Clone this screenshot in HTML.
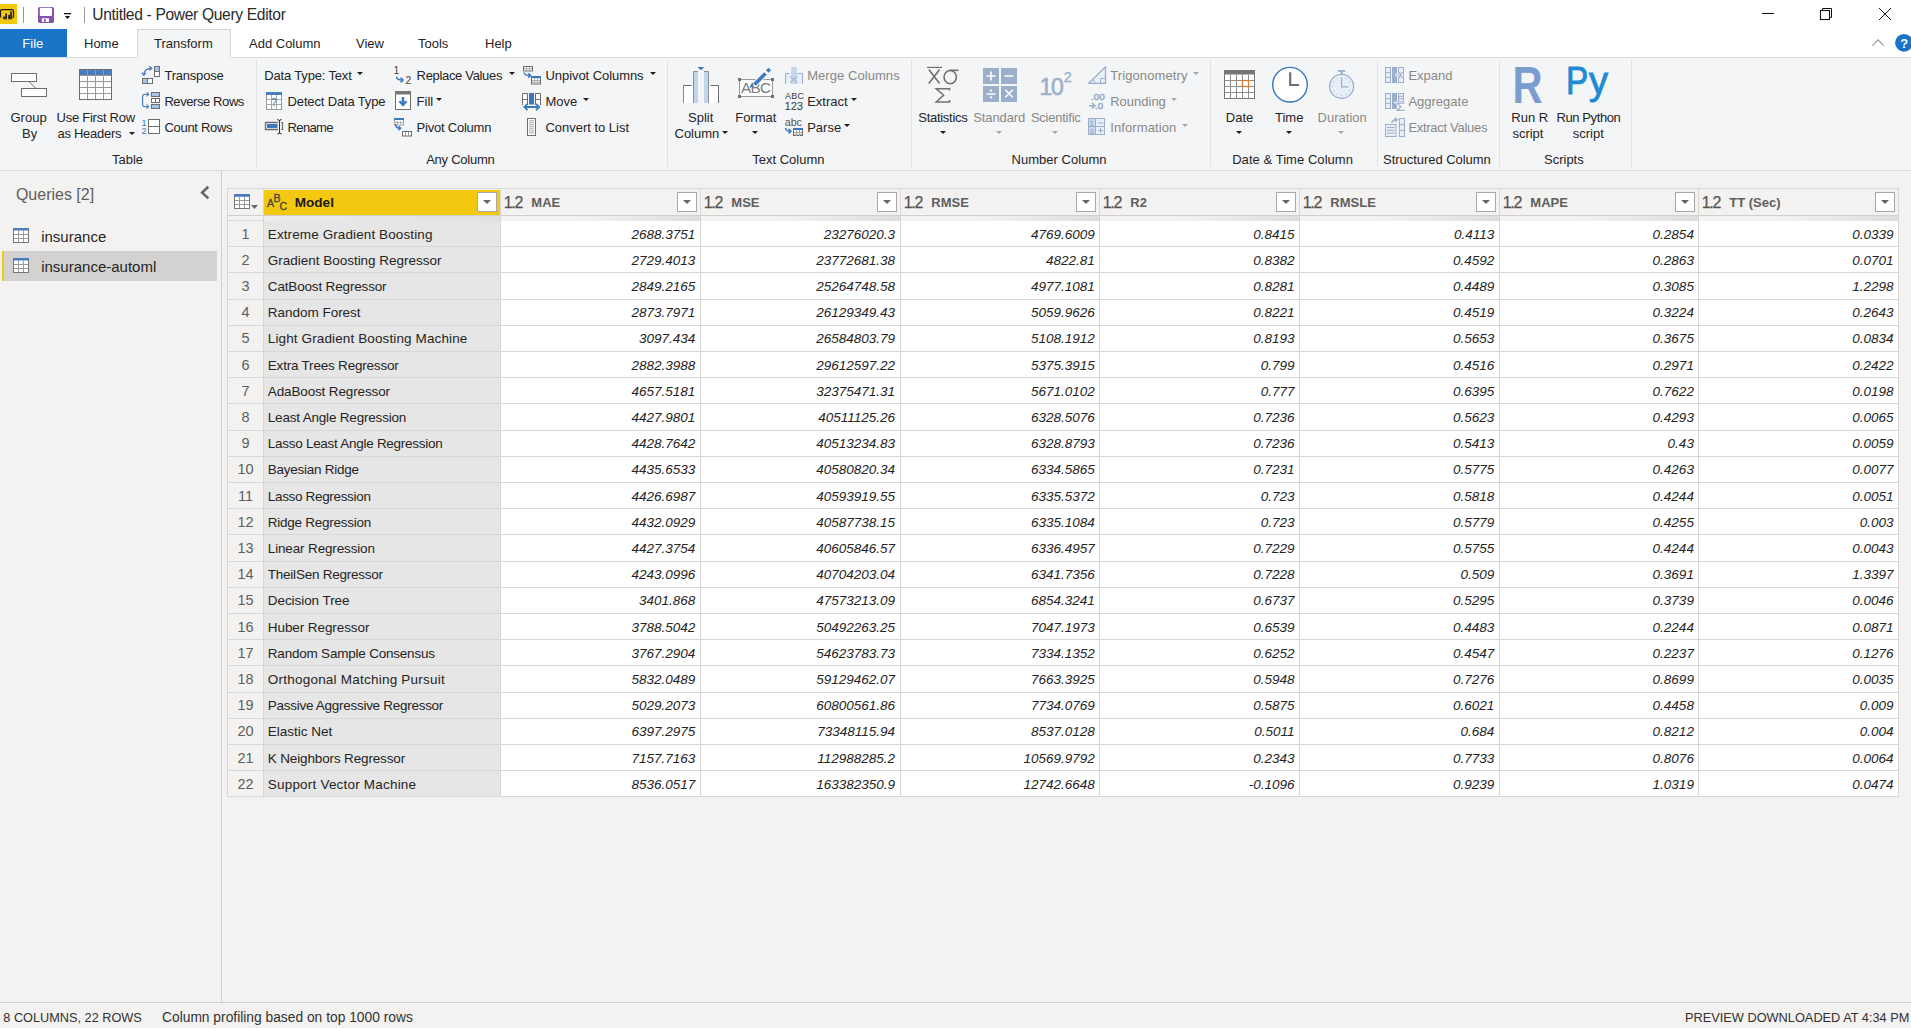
<!DOCTYPE html><html><head><meta charset="utf-8"><title>Power Query Editor</title><style>
*{margin:0;padding:0;box-sizing:border-box}
html,body{width:1911px;height:1028px;overflow:hidden;background:#f3f2f1;font-family:"Liberation Sans",sans-serif}
.t{position:absolute;white-space:pre;line-height:1}
.r{position:absolute}
.s{position:absolute;overflow:visible}
</style></head><body>
<div class="r" style="left:0px;top:0px;width:1911px;height:57px;background:#ffffff;"></div>
<div class="t" style="left:92.3px;top:7.29px;font-size:15.6px;color:#2a2a2a;letter-spacing:-0.33px;">Untitled - Power Query Editor</div>
<div class="r" style="left:0px;top:57px;width:1911px;height:1px;background:#dadbdc;"></div>
<div class="r" style="left:0px;top:29px;width:67px;height:28px;background:#1a75c9;"></div>
<div class="t" style="left:22.3px;top:37.00px;font-size:13px;color:#ffffff;">File</div>
<div class="r" style="left:137px;top:29px;width:94px;height:29px;background:#f4f5f7;border:1px solid #d6d6d6;border-bottom:none;"></div>
<div class="t" style="left:84px;top:37.00px;font-size:13px;color:#252423;">Home</div>
<div class="t" style="left:154px;top:37.00px;font-size:13px;color:#252423;">Transform</div>
<div class="t" style="left:249px;top:37.00px;font-size:13px;color:#252423;">Add Column</div>
<div class="t" style="left:356px;top:37.00px;font-size:13px;color:#252423;">View</div>
<div class="t" style="left:418px;top:37.00px;font-size:13px;color:#252423;">Tools</div>
<div class="t" style="left:485px;top:37.00px;font-size:13px;color:#252423;">Help</div>
<div class="r" style="left:0px;top:58px;width:1911px;height:112px;background:#f4f5f7;"></div>
<div class="r" style="left:137px;top:57px;width:94px;height:1px;background:#f4f5f7;"></div>
<div class="r" style="left:0px;top:170px;width:1911px;height:1px;background:#dadada;"></div>
<div class="r" style="left:256px;top:60px;width:1px;height:107px;background:#e1e2e4;"></div>
<div class="r" style="left:667px;top:60px;width:1px;height:107px;background:#e1e2e4;"></div>
<div class="r" style="left:911px;top:60px;width:1px;height:107px;background:#e1e2e4;"></div>
<div class="r" style="left:1210px;top:60px;width:1px;height:107px;background:#e1e2e4;"></div>
<div class="r" style="left:1377px;top:60px;width:1px;height:107px;background:#e1e2e4;"></div>
<div class="r" style="left:1499px;top:60px;width:1px;height:107px;background:#e1e2e4;"></div>
<div class="r" style="left:1631px;top:60px;width:1px;height:107px;background:#e1e2e4;"></div>
<div class="t" style="left:10.5px;top:111.00px;font-size:13px;color:#252423;">Group</div>
<div class="t" style="left:22px;top:127.00px;font-size:13px;color:#252423;">By</div>
<div class="t" style="left:56.6px;top:111.00px;font-size:13px;color:#252423;letter-spacing:-0.262px;">Use First Row</div>
<div class="t" style="left:57.5px;top:127.00px;font-size:13px;color:#252423;letter-spacing:-0.284px;">as Headers</div>
<svg class="s" style="left:129px;top:132px" width="6" height="4" viewBox="0 0 6 4"><path d="M0 0H6L3.0 3Z" fill="#1f1f1f"/></svg>
<div class="t" style="left:164.4px;top:69.00px;font-size:13px;color:#252423;letter-spacing:-0.207px;">Transpose</div>
<div class="t" style="left:164.4px;top:95.00px;font-size:13px;color:#252423;letter-spacing:-0.414px;">Reverse Rows</div>
<div class="t" style="left:164.5px;top:121.00px;font-size:13px;color:#252423;letter-spacing:-0.303px;">Count Rows</div>
<div class="t" style="left:112px;top:153.00px;font-size:13px;color:#252423;">Table</div>
<div class="t" style="left:264.3px;top:69.00px;font-size:13px;color:#252423;letter-spacing:-0.168px;">Data Type: Text</div>
<svg class="s" style="left:357px;top:72px" width="6" height="4" viewBox="0 0 6 4"><path d="M0 0H6L3.0 3Z" fill="#1f1f1f"/></svg>
<div class="t" style="left:287.6px;top:95.00px;font-size:13px;color:#252423;letter-spacing:-0.156px;">Detect Data Type</div>
<div class="t" style="left:287.6px;top:121.00px;font-size:13px;color:#252423;letter-spacing:-0.665px;">Rename</div>
<div class="t" style="left:416.6px;top:69.00px;font-size:13px;color:#252423;letter-spacing:-0.329px;">Replace Values</div>
<svg class="s" style="left:509px;top:72px" width="6" height="4" viewBox="0 0 6 4"><path d="M0 0H6L3.0 3Z" fill="#1f1f1f"/></svg>
<div class="t" style="left:416.6px;top:95.00px;font-size:13px;color:#252423;">Fill</div>
<svg class="s" style="left:436px;top:98px" width="6" height="4" viewBox="0 0 6 4"><path d="M0 0H6L3.0 3Z" fill="#1f1f1f"/></svg>
<div class="t" style="left:416.6px;top:121.00px;font-size:13px;color:#252423;letter-spacing:-0.227px;">Pivot Column</div>
<div class="t" style="left:545.5px;top:69.00px;font-size:13px;color:#252423;letter-spacing:-0.065px;">Unpivot Columns</div>
<svg class="s" style="left:650px;top:72px" width="6" height="4" viewBox="0 0 6 4"><path d="M0 0H6L3.0 3Z" fill="#1f1f1f"/></svg>
<div class="t" style="left:545.5px;top:95.00px;font-size:13px;color:#252423;">Move</div>
<svg class="s" style="left:583px;top:98px" width="6" height="4" viewBox="0 0 6 4"><path d="M0 0H6L3.0 3Z" fill="#1f1f1f"/></svg>
<div class="t" style="left:545.5px;top:121.00px;font-size:13px;color:#252423;letter-spacing:-0.023px;">Convert to List</div>
<div class="t" style="left:426.2px;top:153.00px;font-size:13px;color:#252423;letter-spacing:-0.248px;">Any Column</div>
<div class="t" style="left:688px;top:111.00px;font-size:13px;color:#252423;">Split</div>
<div class="t" style="left:674.5px;top:127.00px;font-size:13px;color:#252423;">Column</div>
<svg class="s" style="left:722px;top:131px" width="6" height="4" viewBox="0 0 6 4"><path d="M0 0H6L3.0 3Z" fill="#1f1f1f"/></svg>
<div class="t" style="left:735.2px;top:111.00px;font-size:13px;color:#252423;">Format</div>
<svg class="s" style="left:752px;top:131px" width="6" height="4" viewBox="0 0 6 4"><path d="M0 0H6L3.0 3Z" fill="#1f1f1f"/></svg>
<div class="t" style="left:807.2px;top:69.00px;font-size:13px;color:#8a8886;letter-spacing:0.059px;">Merge Columns</div>
<div class="t" style="left:807.2px;top:95.00px;font-size:13px;color:#252423;">Extract</div>
<svg class="s" style="left:851px;top:98px" width="6" height="4" viewBox="0 0 6 4"><path d="M0 0H6L3.0 3Z" fill="#1f1f1f"/></svg>
<div class="t" style="left:807.2px;top:121.00px;font-size:13px;color:#252423;">Parse</div>
<svg class="s" style="left:844px;top:124px" width="6" height="4" viewBox="0 0 6 4"><path d="M0 0H6L3.0 3Z" fill="#1f1f1f"/></svg>
<div class="t" style="left:752.2px;top:153.00px;font-size:13px;color:#252423;">Text Column</div>
<div class="t" style="left:918.3px;top:111.00px;font-size:13px;color:#252423;letter-spacing:-0.289px;">Statistics</div>
<svg class="s" style="left:940.3px;top:131px" width="6" height="4" viewBox="0 0 6 4"><path d="M0 0H6L3.0 3Z" fill="#1f1f1f"/></svg>
<div class="t" style="left:973.2px;top:111.00px;font-size:13px;color:#8a8886;letter-spacing:-0.093px;">Standard</div>
<svg class="s" style="left:996px;top:131px" width="6" height="4" viewBox="0 0 6 4"><path d="M0 0H6L3.0 3Z" fill="#a6a6a6"/></svg>
<div class="t" style="left:1030.9px;top:111.00px;font-size:13px;color:#8a8886;letter-spacing:-0.236px;">Scientific</div>
<svg class="s" style="left:1052px;top:131px" width="6" height="4" viewBox="0 0 6 4"><path d="M0 0H6L3.0 3Z" fill="#a6a6a6"/></svg>
<div class="t" style="left:1110.2px;top:69.00px;font-size:13px;color:#8a8886;letter-spacing:0.107px;">Trigonometry</div>
<svg class="s" style="left:1193px;top:72px" width="6" height="4" viewBox="0 0 6 4"><path d="M0 0H6L3.0 3Z" fill="#a6a6a6"/></svg>
<div class="t" style="left:1110.2px;top:95.00px;font-size:13px;color:#8a8886;">Rounding</div>
<svg class="s" style="left:1171px;top:98px" width="6" height="4" viewBox="0 0 6 4"><path d="M0 0H6L3.0 3Z" fill="#a6a6a6"/></svg>
<div class="t" style="left:1110.2px;top:121.00px;font-size:13px;color:#8a8886;letter-spacing:0.1px;">Information</div>
<svg class="s" style="left:1182px;top:124px" width="6" height="4" viewBox="0 0 6 4"><path d="M0 0H6L3.0 3Z" fill="#a6a6a6"/></svg>
<div class="t" style="left:1011.5px;top:153.00px;font-size:13px;color:#252423;letter-spacing:0.036px;">Number Column</div>
<div class="t" style="left:1225.8px;top:111.00px;font-size:13px;color:#252423;">Date</div>
<svg class="s" style="left:1236px;top:131px" width="6" height="4" viewBox="0 0 6 4"><path d="M0 0H6L3.0 3Z" fill="#1f1f1f"/></svg>
<div class="t" style="left:1275px;top:111.00px;font-size:13px;color:#252423;">Time</div>
<svg class="s" style="left:1286px;top:131px" width="6" height="4" viewBox="0 0 6 4"><path d="M0 0H6L3.0 3Z" fill="#1f1f1f"/></svg>
<div class="t" style="left:1317.6px;top:111.00px;font-size:13px;color:#8a8886;">Duration</div>
<svg class="s" style="left:1338px;top:131px" width="6" height="4" viewBox="0 0 6 4"><path d="M0 0H6L3.0 3Z" fill="#a6a6a6"/></svg>
<div class="t" style="left:1232.2px;top:153.00px;font-size:13px;color:#252423;letter-spacing:0.049px;">Date &amp; Time Column</div>
<div class="t" style="left:1408.4px;top:69.00px;font-size:13px;color:#8a8886;">Expand</div>
<div class="t" style="left:1408.4px;top:95.00px;font-size:13px;color:#8a8886;">Aggregate</div>
<div class="t" style="left:1408.4px;top:121.00px;font-size:13px;color:#8a8886;letter-spacing:-0.293px;">Extract Values</div>
<div class="t" style="left:1383px;top:153.00px;font-size:13px;color:#252423;letter-spacing:-0.036px;">Structured Column</div>
<div class="t" style="left:1511.3px;top:111.00px;font-size:13px;color:#252423;">Run R</div>
<div class="t" style="left:1512.4px;top:127.00px;font-size:13px;color:#252423;">script</div>
<div class="t" style="left:1556.5px;top:111.00px;font-size:13px;color:#252423;letter-spacing:-0.406px;">Run Python</div>
<div class="t" style="left:1572.7px;top:127.00px;font-size:13px;color:#252423;">script</div>
<div class="t" style="left:1544px;top:153.00px;font-size:13px;color:#252423;">Scripts</div>
<div class="r" style="left:221px;top:171px;width:1px;height:831px;background:#d2d0ce;"></div>
<div class="t" style="left:15.9px;top:187.46px;font-size:16px;color:#5f5d5b;">Queries [2]</div>
<div class="r" style="left:2px;top:251px;width:215px;height:30px;background:#d3d2d0;"></div>
<div class="r" style="left:2px;top:251px;width:2px;height:30px;background:#f2c811;"></div>
<div class="t" style="left:41.2px;top:229.30px;font-size:15px;color:#252423;">insurance</div>
<div class="t" style="left:41.2px;top:259.30px;font-size:15px;color:#252423;">insurance-automl</div>
<div class="r" style="left:227px;top:188px;width:1672px;height:1px;background:#d8d7d6;"></div>
<div class="r" style="left:227px;top:189px;width:1672px;height:26px;background:#f3f2f1;"></div>
<div class="r" style="left:264px;top:190px;width:236px;height:25px;background:#f2c811;"></div>
<div class="r" style="left:227px;top:215px;width:1672px;height:1px;background:#d0cfce;"></div>
<div class="r" style="left:227px;top:216px;width:1672px;height:5px;background:#f3f2f1;"></div>
<div class="r" style="left:264px;top:216px;width:236px;height:5px;background:linear-gradient(90deg,#ececec,#e0e0e0);"></div>
<div class="r" style="left:501px;top:216px;width:199px;height:5px;background:linear-gradient(90deg,#f4f4f4 0%,#f1f1f1 45%,#dedede 100%);"></div>
<div class="r" style="left:701px;top:216px;width:199px;height:5px;background:linear-gradient(90deg,#f4f4f4 0%,#f1f1f1 45%,#dedede 100%);"></div>
<div class="r" style="left:901px;top:216px;width:198px;height:5px;background:linear-gradient(90deg,#f4f4f4 0%,#f1f1f1 45%,#dedede 100%);"></div>
<div class="r" style="left:1100px;top:216px;width:199px;height:5px;background:linear-gradient(90deg,#f4f4f4 0%,#f1f1f1 45%,#dedede 100%);"></div>
<div class="r" style="left:1300px;top:216px;width:199px;height:5px;background:linear-gradient(90deg,#f4f4f4 0%,#f1f1f1 45%,#dedede 100%);"></div>
<div class="r" style="left:1500px;top:216px;width:198px;height:5px;background:linear-gradient(90deg,#f4f4f4 0%,#f1f1f1 45%,#dedede 100%);"></div>
<div class="r" style="left:1699px;top:216px;width:199px;height:5px;background:linear-gradient(90deg,#f4f4f4 0%,#f1f1f1 45%,#dedede 100%);"></div>
<div class="r" style="left:227px;top:220px;width:36px;height:1px;background:#d8d7d6;"></div>
<div class="r" style="left:264px;top:221px;width:236px;height:575px;background:#e6e6e6;"></div>
<div class="r" style="left:501px;top:221px;width:1398px;height:575px;background:#ffffff;"></div>
<div class="r" style="left:227px;top:246px;width:1672px;height:1px;background:#d8d7d6;"></div>
<div class="r" style="left:227px;top:272px;width:1672px;height:1px;background:#d8d7d6;"></div>
<div class="r" style="left:227px;top:299px;width:1672px;height:1px;background:#d8d7d6;"></div>
<div class="r" style="left:227px;top:325px;width:1672px;height:1px;background:#d8d7d6;"></div>
<div class="r" style="left:227px;top:351px;width:1672px;height:1px;background:#d8d7d6;"></div>
<div class="r" style="left:227px;top:377px;width:1672px;height:1px;background:#d8d7d6;"></div>
<div class="r" style="left:227px;top:403px;width:1672px;height:1px;background:#d8d7d6;"></div>
<div class="r" style="left:227px;top:430px;width:1672px;height:1px;background:#d8d7d6;"></div>
<div class="r" style="left:227px;top:456px;width:1672px;height:1px;background:#d8d7d6;"></div>
<div class="r" style="left:227px;top:482px;width:1672px;height:1px;background:#d8d7d6;"></div>
<div class="r" style="left:227px;top:508px;width:1672px;height:1px;background:#d8d7d6;"></div>
<div class="r" style="left:227px;top:534px;width:1672px;height:1px;background:#d8d7d6;"></div>
<div class="r" style="left:227px;top:561px;width:1672px;height:1px;background:#d8d7d6;"></div>
<div class="r" style="left:227px;top:587px;width:1672px;height:1px;background:#d8d7d6;"></div>
<div class="r" style="left:227px;top:613px;width:1672px;height:1px;background:#d8d7d6;"></div>
<div class="r" style="left:227px;top:639px;width:1672px;height:1px;background:#d8d7d6;"></div>
<div class="r" style="left:227px;top:665px;width:1672px;height:1px;background:#d8d7d6;"></div>
<div class="r" style="left:227px;top:692px;width:1672px;height:1px;background:#d8d7d6;"></div>
<div class="r" style="left:227px;top:718px;width:1672px;height:1px;background:#d8d7d6;"></div>
<div class="r" style="left:227px;top:744px;width:1672px;height:1px;background:#d8d7d6;"></div>
<div class="r" style="left:227px;top:770px;width:1672px;height:1px;background:#d8d7d6;"></div>
<div class="r" style="left:227px;top:796px;width:1672px;height:1px;background:#d8d7d6;"></div>
<div class="r" style="left:227px;top:188px;width:1px;height:609px;background:#d8d7d6;"></div>
<div class="r" style="left:263px;top:189px;width:1px;height:608px;background:#d8d7d6;"></div>
<div class="r" style="left:500px;top:189px;width:1px;height:608px;background:#d8d7d6;"></div>
<div class="r" style="left:700px;top:189px;width:1px;height:608px;background:#d8d7d6;"></div>
<div class="r" style="left:900px;top:189px;width:1px;height:608px;background:#d8d7d6;"></div>
<div class="r" style="left:1099px;top:189px;width:1px;height:608px;background:#d8d7d6;"></div>
<div class="r" style="left:1299px;top:189px;width:1px;height:608px;background:#d8d7d6;"></div>
<div class="r" style="left:1499px;top:189px;width:1px;height:608px;background:#d8d7d6;"></div>
<div class="r" style="left:1698px;top:189px;width:1px;height:608px;background:#d8d7d6;"></div>
<div class="r" style="left:1898px;top:189px;width:1px;height:608px;background:#d8d7d6;"></div>
<div class="t" style="left:294.7px;top:195.99px;font-size:13.6px;color:#1b1a19;font-weight:bold;">Model</div>
<div class="t" style="left:503.7px;top:195.46px;font-size:16px;color:#575553;letter-spacing:-1.3px;-webkit-text-stroke:0.25px #575553;">1.2</div>
<div class="t" style="left:531.3px;top:196.00px;font-size:13px;color:#605e5c;font-weight:bold;">MAE</div>
<div class="t" style="left:703.7px;top:195.46px;font-size:16px;color:#575553;letter-spacing:-1.3px;-webkit-text-stroke:0.25px #575553;">1.2</div>
<div class="t" style="left:731.3px;top:196.00px;font-size:13px;color:#605e5c;font-weight:bold;">MSE</div>
<div class="t" style="left:903.7px;top:195.46px;font-size:16px;color:#575553;letter-spacing:-1.3px;-webkit-text-stroke:0.25px #575553;">1.2</div>
<div class="t" style="left:931.3px;top:196.00px;font-size:13px;color:#605e5c;font-weight:bold;">RMSE</div>
<div class="t" style="left:1102.7px;top:195.46px;font-size:16px;color:#575553;letter-spacing:-1.3px;-webkit-text-stroke:0.25px #575553;">1.2</div>
<div class="t" style="left:1130.3px;top:196.00px;font-size:13px;color:#605e5c;font-weight:bold;">R2</div>
<div class="t" style="left:1302.7px;top:195.46px;font-size:16px;color:#575553;letter-spacing:-1.3px;-webkit-text-stroke:0.25px #575553;">1.2</div>
<div class="t" style="left:1330.3px;top:196.00px;font-size:13px;color:#605e5c;font-weight:bold;">RMSLE</div>
<div class="t" style="left:1502.7px;top:195.46px;font-size:16px;color:#575553;letter-spacing:-1.3px;-webkit-text-stroke:0.25px #575553;">1.2</div>
<div class="t" style="left:1530.3px;top:196.00px;font-size:13px;color:#605e5c;font-weight:bold;">MAPE</div>
<div class="t" style="left:1701.7px;top:195.46px;font-size:16px;color:#575553;letter-spacing:-1.3px;-webkit-text-stroke:0.25px #575553;">1.2</div>
<div class="t" style="left:1729.3px;top:196.00px;font-size:13px;color:#605e5c;font-weight:bold;">TT (Sec)</div>
<div class="r" style="left:477px;top:192px;width:20px;height:20px;background:#ffffff;border:1px solid #a8a8a8;"></div>
<svg class="s" style="left:483px;top:200px" width="8" height="5" viewBox="0 0 8 5"><path d="M0 0H8L4.0 4Z" fill="#666666"/></svg>
<div class="r" style="left:677px;top:192px;width:20px;height:20px;background:#ffffff;border:1px solid #a8a8a8;"></div>
<svg class="s" style="left:683px;top:200px" width="8" height="5" viewBox="0 0 8 5"><path d="M0 0H8L4.0 4Z" fill="#666666"/></svg>
<div class="r" style="left:877px;top:192px;width:20px;height:20px;background:#ffffff;border:1px solid #a8a8a8;"></div>
<svg class="s" style="left:883px;top:200px" width="8" height="5" viewBox="0 0 8 5"><path d="M0 0H8L4.0 4Z" fill="#666666"/></svg>
<div class="r" style="left:1076px;top:192px;width:20px;height:20px;background:#ffffff;border:1px solid #a8a8a8;"></div>
<svg class="s" style="left:1082px;top:200px" width="8" height="5" viewBox="0 0 8 5"><path d="M0 0H8L4.0 4Z" fill="#666666"/></svg>
<div class="r" style="left:1276px;top:192px;width:20px;height:20px;background:#ffffff;border:1px solid #a8a8a8;"></div>
<svg class="s" style="left:1282px;top:200px" width="8" height="5" viewBox="0 0 8 5"><path d="M0 0H8L4.0 4Z" fill="#666666"/></svg>
<div class="r" style="left:1476px;top:192px;width:20px;height:20px;background:#ffffff;border:1px solid #a8a8a8;"></div>
<svg class="s" style="left:1482px;top:200px" width="8" height="5" viewBox="0 0 8 5"><path d="M0 0H8L4.0 4Z" fill="#666666"/></svg>
<div class="r" style="left:1675px;top:192px;width:20px;height:20px;background:#ffffff;border:1px solid #a8a8a8;"></div>
<svg class="s" style="left:1681px;top:200px" width="8" height="5" viewBox="0 0 8 5"><path d="M0 0H8L4.0 4Z" fill="#666666"/></svg>
<div class="r" style="left:1875px;top:192px;width:20px;height:20px;background:#ffffff;border:1px solid #a8a8a8;"></div>
<svg class="s" style="left:1881px;top:200px" width="8" height="5" viewBox="0 0 8 5"><path d="M0 0H8L4.0 4Z" fill="#666666"/></svg>
<div class="t" style="left:228px;top:227.23px;font-size:14.5px;color:#605e5c;width:35px;text-align:center;">1</div>
<div class="t" style="left:267.8px;top:227.57px;font-size:13.5px;color:#252423;letter-spacing:0.105px;">Extreme Gradient Boosting</div>
<div class="t" style="right:1215.69px;top:227.57px;font-size:13.5px;color:#252423;font-style:italic;">2688.3751</div>
<div class="t" style="right:1015.97px;top:227.57px;font-size:13.5px;color:#252423;font-style:italic;">23276020.3</div>
<div class="t" style="right:816.26px;top:227.57px;font-size:13.5px;color:#252423;font-style:italic;">4769.6009</div>
<div class="t" style="right:616.54px;top:227.57px;font-size:13.5px;color:#252423;font-style:italic;">0.8415</div>
<div class="t" style="right:416.8299999999999px;top:227.57px;font-size:13.5px;color:#252423;font-style:italic;">0.4113</div>
<div class="t" style="right:217.1199999999999px;top:227.57px;font-size:13.5px;color:#252423;font-style:italic;">0.2854</div>
<div class="t" style="right:17.40000000000009px;top:227.57px;font-size:13.5px;color:#252423;font-style:italic;">0.0339</div>
<div class="t" style="left:228px;top:253.23px;font-size:14.5px;color:#605e5c;width:35px;text-align:center;">2</div>
<div class="t" style="left:267.8px;top:253.57px;font-size:13.5px;color:#252423;letter-spacing:-0.015px;">Gradient Boosting Regressor</div>
<div class="t" style="right:1215.69px;top:253.57px;font-size:13.5px;color:#252423;font-style:italic;">2729.4013</div>
<div class="t" style="right:1015.97px;top:253.57px;font-size:13.5px;color:#252423;font-style:italic;">23772681.38</div>
<div class="t" style="right:816.26px;top:253.57px;font-size:13.5px;color:#252423;font-style:italic;">4822.81</div>
<div class="t" style="right:616.54px;top:253.57px;font-size:13.5px;color:#252423;font-style:italic;">0.8382</div>
<div class="t" style="right:416.8299999999999px;top:253.57px;font-size:13.5px;color:#252423;font-style:italic;">0.4592</div>
<div class="t" style="right:217.1199999999999px;top:253.57px;font-size:13.5px;color:#252423;font-style:italic;">0.2863</div>
<div class="t" style="right:17.40000000000009px;top:253.57px;font-size:13.5px;color:#252423;font-style:italic;">0.0701</div>
<div class="t" style="left:228px;top:279.23px;font-size:14.5px;color:#605e5c;width:35px;text-align:center;">3</div>
<div class="t" style="left:267.8px;top:279.57px;font-size:13.5px;color:#252423;letter-spacing:-0.162px;">CatBoost Regressor</div>
<div class="t" style="right:1215.69px;top:279.57px;font-size:13.5px;color:#252423;font-style:italic;">2849.2165</div>
<div class="t" style="right:1015.97px;top:279.57px;font-size:13.5px;color:#252423;font-style:italic;">25264748.58</div>
<div class="t" style="right:816.26px;top:279.57px;font-size:13.5px;color:#252423;font-style:italic;">4977.1081</div>
<div class="t" style="right:616.54px;top:279.57px;font-size:13.5px;color:#252423;font-style:italic;">0.8281</div>
<div class="t" style="right:416.8299999999999px;top:279.57px;font-size:13.5px;color:#252423;font-style:italic;">0.4489</div>
<div class="t" style="right:217.1199999999999px;top:279.57px;font-size:13.5px;color:#252423;font-style:italic;">0.3085</div>
<div class="t" style="right:17.40000000000009px;top:279.57px;font-size:13.5px;color:#252423;font-style:italic;">1.2298</div>
<div class="t" style="left:228px;top:305.23px;font-size:14.5px;color:#605e5c;width:35px;text-align:center;">4</div>
<div class="t" style="left:267.8px;top:305.57px;font-size:13.5px;color:#252423;letter-spacing:-0.02px;">Random Forest</div>
<div class="t" style="right:1215.69px;top:305.57px;font-size:13.5px;color:#252423;font-style:italic;">2873.7971</div>
<div class="t" style="right:1015.97px;top:305.57px;font-size:13.5px;color:#252423;font-style:italic;">26129349.43</div>
<div class="t" style="right:816.26px;top:305.57px;font-size:13.5px;color:#252423;font-style:italic;">5059.9626</div>
<div class="t" style="right:616.54px;top:305.57px;font-size:13.5px;color:#252423;font-style:italic;">0.8221</div>
<div class="t" style="right:416.8299999999999px;top:305.57px;font-size:13.5px;color:#252423;font-style:italic;">0.4519</div>
<div class="t" style="right:217.1199999999999px;top:305.57px;font-size:13.5px;color:#252423;font-style:italic;">0.3224</div>
<div class="t" style="right:17.40000000000009px;top:305.57px;font-size:13.5px;color:#252423;font-style:italic;">0.2643</div>
<div class="t" style="left:228px;top:331.23px;font-size:14.5px;color:#605e5c;width:35px;text-align:center;">5</div>
<div class="t" style="left:267.8px;top:331.57px;font-size:13.5px;color:#252423;letter-spacing:0.121px;">Light Gradient Boosting Machine</div>
<div class="t" style="right:1215.69px;top:331.57px;font-size:13.5px;color:#252423;font-style:italic;">3097.434</div>
<div class="t" style="right:1015.97px;top:331.57px;font-size:13.5px;color:#252423;font-style:italic;">26584803.79</div>
<div class="t" style="right:816.26px;top:331.57px;font-size:13.5px;color:#252423;font-style:italic;">5108.1912</div>
<div class="t" style="right:616.54px;top:331.57px;font-size:13.5px;color:#252423;font-style:italic;">0.8193</div>
<div class="t" style="right:416.8299999999999px;top:331.57px;font-size:13.5px;color:#252423;font-style:italic;">0.5653</div>
<div class="t" style="right:217.1199999999999px;top:331.57px;font-size:13.5px;color:#252423;font-style:italic;">0.3675</div>
<div class="t" style="right:17.40000000000009px;top:331.57px;font-size:13.5px;color:#252423;font-style:italic;">0.0834</div>
<div class="t" style="left:228px;top:358.23px;font-size:14.5px;color:#605e5c;width:35px;text-align:center;">6</div>
<div class="t" style="left:267.8px;top:358.57px;font-size:13.5px;color:#252423;letter-spacing:-0.205px;">Extra Trees Regressor</div>
<div class="t" style="right:1215.69px;top:358.57px;font-size:13.5px;color:#252423;font-style:italic;">2882.3988</div>
<div class="t" style="right:1015.97px;top:358.57px;font-size:13.5px;color:#252423;font-style:italic;">29612597.22</div>
<div class="t" style="right:816.26px;top:358.57px;font-size:13.5px;color:#252423;font-style:italic;">5375.3915</div>
<div class="t" style="right:616.54px;top:358.57px;font-size:13.5px;color:#252423;font-style:italic;">0.799</div>
<div class="t" style="right:416.8299999999999px;top:358.57px;font-size:13.5px;color:#252423;font-style:italic;">0.4516</div>
<div class="t" style="right:217.1199999999999px;top:358.57px;font-size:13.5px;color:#252423;font-style:italic;">0.2971</div>
<div class="t" style="right:17.40000000000009px;top:358.57px;font-size:13.5px;color:#252423;font-style:italic;">0.2422</div>
<div class="t" style="left:228px;top:384.23px;font-size:14.5px;color:#605e5c;width:35px;text-align:center;">7</div>
<div class="t" style="left:267.8px;top:384.57px;font-size:13.5px;color:#252423;letter-spacing:-0.139px;">AdaBoost Regressor</div>
<div class="t" style="right:1215.69px;top:384.57px;font-size:13.5px;color:#252423;font-style:italic;">4657.5181</div>
<div class="t" style="right:1015.97px;top:384.57px;font-size:13.5px;color:#252423;font-style:italic;">32375471.31</div>
<div class="t" style="right:816.26px;top:384.57px;font-size:13.5px;color:#252423;font-style:italic;">5671.0102</div>
<div class="t" style="right:616.54px;top:384.57px;font-size:13.5px;color:#252423;font-style:italic;">0.777</div>
<div class="t" style="right:416.8299999999999px;top:384.57px;font-size:13.5px;color:#252423;font-style:italic;">0.6395</div>
<div class="t" style="right:217.1199999999999px;top:384.57px;font-size:13.5px;color:#252423;font-style:italic;">0.7622</div>
<div class="t" style="right:17.40000000000009px;top:384.57px;font-size:13.5px;color:#252423;font-style:italic;">0.0198</div>
<div class="t" style="left:228px;top:410.23px;font-size:14.5px;color:#605e5c;width:35px;text-align:center;">8</div>
<div class="t" style="left:267.8px;top:410.57px;font-size:13.5px;color:#252423;letter-spacing:-0.192px;">Least Angle Regression</div>
<div class="t" style="right:1215.69px;top:410.57px;font-size:13.5px;color:#252423;font-style:italic;">4427.9801</div>
<div class="t" style="right:1015.97px;top:410.57px;font-size:13.5px;color:#252423;font-style:italic;">40511125.26</div>
<div class="t" style="right:816.26px;top:410.57px;font-size:13.5px;color:#252423;font-style:italic;">6328.5076</div>
<div class="t" style="right:616.54px;top:410.57px;font-size:13.5px;color:#252423;font-style:italic;">0.7236</div>
<div class="t" style="right:416.8299999999999px;top:410.57px;font-size:13.5px;color:#252423;font-style:italic;">0.5623</div>
<div class="t" style="right:217.1199999999999px;top:410.57px;font-size:13.5px;color:#252423;font-style:italic;">0.4293</div>
<div class="t" style="right:17.40000000000009px;top:410.57px;font-size:13.5px;color:#252423;font-style:italic;">0.0065</div>
<div class="t" style="left:228px;top:436.23px;font-size:14.5px;color:#605e5c;width:35px;text-align:center;">9</div>
<div class="t" style="left:267.8px;top:436.57px;font-size:13.5px;color:#252423;letter-spacing:-0.278px;">Lasso Least Angle Regression</div>
<div class="t" style="right:1215.69px;top:436.57px;font-size:13.5px;color:#252423;font-style:italic;">4428.7642</div>
<div class="t" style="right:1015.97px;top:436.57px;font-size:13.5px;color:#252423;font-style:italic;">40513234.83</div>
<div class="t" style="right:816.26px;top:436.57px;font-size:13.5px;color:#252423;font-style:italic;">6328.8793</div>
<div class="t" style="right:616.54px;top:436.57px;font-size:13.5px;color:#252423;font-style:italic;">0.7236</div>
<div class="t" style="right:416.8299999999999px;top:436.57px;font-size:13.5px;color:#252423;font-style:italic;">0.5413</div>
<div class="t" style="right:217.1199999999999px;top:436.57px;font-size:13.5px;color:#252423;font-style:italic;">0.43</div>
<div class="t" style="right:17.40000000000009px;top:436.57px;font-size:13.5px;color:#252423;font-style:italic;">0.0059</div>
<div class="t" style="left:228px;top:462.23px;font-size:14.5px;color:#605e5c;width:35px;text-align:center;">10</div>
<div class="t" style="left:267.8px;top:462.57px;font-size:13.5px;color:#252423;letter-spacing:-0.251px;">Bayesian Ridge</div>
<div class="t" style="right:1215.69px;top:462.57px;font-size:13.5px;color:#252423;font-style:italic;">4435.6533</div>
<div class="t" style="right:1015.97px;top:462.57px;font-size:13.5px;color:#252423;font-style:italic;">40580820.34</div>
<div class="t" style="right:816.26px;top:462.57px;font-size:13.5px;color:#252423;font-style:italic;">6334.5865</div>
<div class="t" style="right:616.54px;top:462.57px;font-size:13.5px;color:#252423;font-style:italic;">0.7231</div>
<div class="t" style="right:416.8299999999999px;top:462.57px;font-size:13.5px;color:#252423;font-style:italic;">0.5775</div>
<div class="t" style="right:217.1199999999999px;top:462.57px;font-size:13.5px;color:#252423;font-style:italic;">0.4263</div>
<div class="t" style="right:17.40000000000009px;top:462.57px;font-size:13.5px;color:#252423;font-style:italic;">0.0077</div>
<div class="t" style="left:228px;top:489.23px;font-size:14.5px;color:#605e5c;width:35px;text-align:center;">11</div>
<div class="t" style="left:267.8px;top:489.57px;font-size:13.5px;color:#252423;letter-spacing:-0.331px;">Lasso Regression</div>
<div class="t" style="right:1215.69px;top:489.57px;font-size:13.5px;color:#252423;font-style:italic;">4426.6987</div>
<div class="t" style="right:1015.97px;top:489.57px;font-size:13.5px;color:#252423;font-style:italic;">40593919.55</div>
<div class="t" style="right:816.26px;top:489.57px;font-size:13.5px;color:#252423;font-style:italic;">6335.5372</div>
<div class="t" style="right:616.54px;top:489.57px;font-size:13.5px;color:#252423;font-style:italic;">0.723</div>
<div class="t" style="right:416.8299999999999px;top:489.57px;font-size:13.5px;color:#252423;font-style:italic;">0.5818</div>
<div class="t" style="right:217.1199999999999px;top:489.57px;font-size:13.5px;color:#252423;font-style:italic;">0.4244</div>
<div class="t" style="right:17.40000000000009px;top:489.57px;font-size:13.5px;color:#252423;font-style:italic;">0.0051</div>
<div class="t" style="left:228px;top:515.23px;font-size:14.5px;color:#605e5c;width:35px;text-align:center;">12</div>
<div class="t" style="left:267.8px;top:515.57px;font-size:13.5px;color:#252423;letter-spacing:-0.254px;">Ridge Regression</div>
<div class="t" style="right:1215.69px;top:515.57px;font-size:13.5px;color:#252423;font-style:italic;">4432.0929</div>
<div class="t" style="right:1015.97px;top:515.57px;font-size:13.5px;color:#252423;font-style:italic;">40587738.15</div>
<div class="t" style="right:816.26px;top:515.57px;font-size:13.5px;color:#252423;font-style:italic;">6335.1084</div>
<div class="t" style="right:616.54px;top:515.57px;font-size:13.5px;color:#252423;font-style:italic;">0.723</div>
<div class="t" style="right:416.8299999999999px;top:515.57px;font-size:13.5px;color:#252423;font-style:italic;">0.5779</div>
<div class="t" style="right:217.1199999999999px;top:515.57px;font-size:13.5px;color:#252423;font-style:italic;">0.4255</div>
<div class="t" style="right:17.40000000000009px;top:515.57px;font-size:13.5px;color:#252423;font-style:italic;">0.003</div>
<div class="t" style="left:228px;top:541.23px;font-size:14.5px;color:#605e5c;width:35px;text-align:center;">13</div>
<div class="t" style="left:267.8px;top:541.57px;font-size:13.5px;color:#252423;letter-spacing:-0.148px;">Linear Regression</div>
<div class="t" style="right:1215.69px;top:541.57px;font-size:13.5px;color:#252423;font-style:italic;">4427.3754</div>
<div class="t" style="right:1015.97px;top:541.57px;font-size:13.5px;color:#252423;font-style:italic;">40605846.57</div>
<div class="t" style="right:816.26px;top:541.57px;font-size:13.5px;color:#252423;font-style:italic;">6336.4957</div>
<div class="t" style="right:616.54px;top:541.57px;font-size:13.5px;color:#252423;font-style:italic;">0.7229</div>
<div class="t" style="right:416.8299999999999px;top:541.57px;font-size:13.5px;color:#252423;font-style:italic;">0.5755</div>
<div class="t" style="right:217.1199999999999px;top:541.57px;font-size:13.5px;color:#252423;font-style:italic;">0.4244</div>
<div class="t" style="right:17.40000000000009px;top:541.57px;font-size:13.5px;color:#252423;font-style:italic;">0.0043</div>
<div class="t" style="left:228px;top:567.23px;font-size:14.5px;color:#605e5c;width:35px;text-align:center;">14</div>
<div class="t" style="left:267.8px;top:567.57px;font-size:13.5px;color:#252423;letter-spacing:-0.236px;">TheilSen Regressor</div>
<div class="t" style="right:1215.69px;top:567.57px;font-size:13.5px;color:#252423;font-style:italic;">4243.0996</div>
<div class="t" style="right:1015.97px;top:567.57px;font-size:13.5px;color:#252423;font-style:italic;">40704203.04</div>
<div class="t" style="right:816.26px;top:567.57px;font-size:13.5px;color:#252423;font-style:italic;">6341.7356</div>
<div class="t" style="right:616.54px;top:567.57px;font-size:13.5px;color:#252423;font-style:italic;">0.7228</div>
<div class="t" style="right:416.8299999999999px;top:567.57px;font-size:13.5px;color:#252423;font-style:italic;">0.509</div>
<div class="t" style="right:217.1199999999999px;top:567.57px;font-size:13.5px;color:#252423;font-style:italic;">0.3691</div>
<div class="t" style="right:17.40000000000009px;top:567.57px;font-size:13.5px;color:#252423;font-style:italic;">1.3397</div>
<div class="t" style="left:228px;top:593.23px;font-size:14.5px;color:#605e5c;width:35px;text-align:center;">15</div>
<div class="t" style="left:267.8px;top:593.57px;font-size:13.5px;color:#252423;letter-spacing:-0.065px;">Decision Tree</div>
<div class="t" style="right:1215.69px;top:593.57px;font-size:13.5px;color:#252423;font-style:italic;">3401.868</div>
<div class="t" style="right:1015.97px;top:593.57px;font-size:13.5px;color:#252423;font-style:italic;">47573213.09</div>
<div class="t" style="right:816.26px;top:593.57px;font-size:13.5px;color:#252423;font-style:italic;">6854.3241</div>
<div class="t" style="right:616.54px;top:593.57px;font-size:13.5px;color:#252423;font-style:italic;">0.6737</div>
<div class="t" style="right:416.8299999999999px;top:593.57px;font-size:13.5px;color:#252423;font-style:italic;">0.5295</div>
<div class="t" style="right:217.1199999999999px;top:593.57px;font-size:13.5px;color:#252423;font-style:italic;">0.3739</div>
<div class="t" style="right:17.40000000000009px;top:593.57px;font-size:13.5px;color:#252423;font-style:italic;">0.0046</div>
<div class="t" style="left:228px;top:620.23px;font-size:14.5px;color:#605e5c;width:35px;text-align:center;">16</div>
<div class="t" style="left:267.8px;top:620.57px;font-size:13.5px;color:#252423;letter-spacing:-0.085px;">Huber Regressor</div>
<div class="t" style="right:1215.69px;top:620.57px;font-size:13.5px;color:#252423;font-style:italic;">3788.5042</div>
<div class="t" style="right:1015.97px;top:620.57px;font-size:13.5px;color:#252423;font-style:italic;">50492263.25</div>
<div class="t" style="right:816.26px;top:620.57px;font-size:13.5px;color:#252423;font-style:italic;">7047.1973</div>
<div class="t" style="right:616.54px;top:620.57px;font-size:13.5px;color:#252423;font-style:italic;">0.6539</div>
<div class="t" style="right:416.8299999999999px;top:620.57px;font-size:13.5px;color:#252423;font-style:italic;">0.4483</div>
<div class="t" style="right:217.1199999999999px;top:620.57px;font-size:13.5px;color:#252423;font-style:italic;">0.2244</div>
<div class="t" style="right:17.40000000000009px;top:620.57px;font-size:13.5px;color:#252423;font-style:italic;">0.0871</div>
<div class="t" style="left:228px;top:646.23px;font-size:14.5px;color:#605e5c;width:35px;text-align:center;">17</div>
<div class="t" style="left:267.8px;top:646.57px;font-size:13.5px;color:#252423;letter-spacing:-0.211px;">Random Sample Consensus</div>
<div class="t" style="right:1215.69px;top:646.57px;font-size:13.5px;color:#252423;font-style:italic;">3767.2904</div>
<div class="t" style="right:1015.97px;top:646.57px;font-size:13.5px;color:#252423;font-style:italic;">54623783.73</div>
<div class="t" style="right:816.26px;top:646.57px;font-size:13.5px;color:#252423;font-style:italic;">7334.1352</div>
<div class="t" style="right:616.54px;top:646.57px;font-size:13.5px;color:#252423;font-style:italic;">0.6252</div>
<div class="t" style="right:416.8299999999999px;top:646.57px;font-size:13.5px;color:#252423;font-style:italic;">0.4547</div>
<div class="t" style="right:217.1199999999999px;top:646.57px;font-size:13.5px;color:#252423;font-style:italic;">0.2237</div>
<div class="t" style="right:17.40000000000009px;top:646.57px;font-size:13.5px;color:#252423;font-style:italic;">0.1276</div>
<div class="t" style="left:228px;top:672.23px;font-size:14.5px;color:#605e5c;width:35px;text-align:center;">18</div>
<div class="t" style="left:267.8px;top:672.57px;font-size:13.5px;color:#252423;letter-spacing:0.223px;">Orthogonal Matching Pursuit</div>
<div class="t" style="right:1215.69px;top:672.57px;font-size:13.5px;color:#252423;font-style:italic;">5832.0489</div>
<div class="t" style="right:1015.97px;top:672.57px;font-size:13.5px;color:#252423;font-style:italic;">59129462.07</div>
<div class="t" style="right:816.26px;top:672.57px;font-size:13.5px;color:#252423;font-style:italic;">7663.3925</div>
<div class="t" style="right:616.54px;top:672.57px;font-size:13.5px;color:#252423;font-style:italic;">0.5948</div>
<div class="t" style="right:416.8299999999999px;top:672.57px;font-size:13.5px;color:#252423;font-style:italic;">0.7276</div>
<div class="t" style="right:217.1199999999999px;top:672.57px;font-size:13.5px;color:#252423;font-style:italic;">0.8699</div>
<div class="t" style="right:17.40000000000009px;top:672.57px;font-size:13.5px;color:#252423;font-style:italic;">0.0035</div>
<div class="t" style="left:228px;top:698.23px;font-size:14.5px;color:#605e5c;width:35px;text-align:center;">19</div>
<div class="t" style="left:267.8px;top:698.57px;font-size:13.5px;color:#252423;letter-spacing:-0.279px;">Passive Aggressive Regressor</div>
<div class="t" style="right:1215.69px;top:698.57px;font-size:13.5px;color:#252423;font-style:italic;">5029.2073</div>
<div class="t" style="right:1015.97px;top:698.57px;font-size:13.5px;color:#252423;font-style:italic;">60800561.86</div>
<div class="t" style="right:816.26px;top:698.57px;font-size:13.5px;color:#252423;font-style:italic;">7734.0769</div>
<div class="t" style="right:616.54px;top:698.57px;font-size:13.5px;color:#252423;font-style:italic;">0.5875</div>
<div class="t" style="right:416.8299999999999px;top:698.57px;font-size:13.5px;color:#252423;font-style:italic;">0.6021</div>
<div class="t" style="right:217.1199999999999px;top:698.57px;font-size:13.5px;color:#252423;font-style:italic;">0.4458</div>
<div class="t" style="right:17.40000000000009px;top:698.57px;font-size:13.5px;color:#252423;font-style:italic;">0.009</div>
<div class="t" style="left:228px;top:724.23px;font-size:14.5px;color:#605e5c;width:35px;text-align:center;">20</div>
<div class="t" style="left:267.8px;top:724.57px;font-size:13.5px;color:#252423;letter-spacing:-0.012px;">Elastic Net</div>
<div class="t" style="right:1215.69px;top:724.57px;font-size:13.5px;color:#252423;font-style:italic;">6397.2975</div>
<div class="t" style="right:1015.97px;top:724.57px;font-size:13.5px;color:#252423;font-style:italic;">73348115.94</div>
<div class="t" style="right:816.26px;top:724.57px;font-size:13.5px;color:#252423;font-style:italic;">8537.0128</div>
<div class="t" style="right:616.54px;top:724.57px;font-size:13.5px;color:#252423;font-style:italic;">0.5011</div>
<div class="t" style="right:416.8299999999999px;top:724.57px;font-size:13.5px;color:#252423;font-style:italic;">0.684</div>
<div class="t" style="right:217.1199999999999px;top:724.57px;font-size:13.5px;color:#252423;font-style:italic;">0.8212</div>
<div class="t" style="right:17.40000000000009px;top:724.57px;font-size:13.5px;color:#252423;font-style:italic;">0.004</div>
<div class="t" style="left:228px;top:751.23px;font-size:14.5px;color:#605e5c;width:35px;text-align:center;">21</div>
<div class="t" style="left:267.8px;top:751.57px;font-size:13.5px;color:#252423;letter-spacing:-0.146px;">K Neighbors Regressor</div>
<div class="t" style="right:1215.69px;top:751.57px;font-size:13.5px;color:#252423;font-style:italic;">7157.7163</div>
<div class="t" style="right:1015.97px;top:751.57px;font-size:13.5px;color:#252423;font-style:italic;">112988285.2</div>
<div class="t" style="right:816.26px;top:751.57px;font-size:13.5px;color:#252423;font-style:italic;">10569.9792</div>
<div class="t" style="right:616.54px;top:751.57px;font-size:13.5px;color:#252423;font-style:italic;">0.2343</div>
<div class="t" style="right:416.8299999999999px;top:751.57px;font-size:13.5px;color:#252423;font-style:italic;">0.7733</div>
<div class="t" style="right:217.1199999999999px;top:751.57px;font-size:13.5px;color:#252423;font-style:italic;">0.8076</div>
<div class="t" style="right:17.40000000000009px;top:751.57px;font-size:13.5px;color:#252423;font-style:italic;">0.0064</div>
<div class="t" style="left:228px;top:777.23px;font-size:14.5px;color:#605e5c;width:35px;text-align:center;">22</div>
<div class="t" style="left:267.8px;top:777.57px;font-size:13.5px;color:#252423;letter-spacing:0.199px;">Support Vector Machine</div>
<div class="t" style="right:1215.69px;top:777.57px;font-size:13.5px;color:#252423;font-style:italic;">8536.0517</div>
<div class="t" style="right:1015.97px;top:777.57px;font-size:13.5px;color:#252423;font-style:italic;">163382350.9</div>
<div class="t" style="right:816.26px;top:777.57px;font-size:13.5px;color:#252423;font-style:italic;">12742.6648</div>
<div class="t" style="right:616.54px;top:777.57px;font-size:13.5px;color:#252423;font-style:italic;">-0.1096</div>
<div class="t" style="right:416.8299999999999px;top:777.57px;font-size:13.5px;color:#252423;font-style:italic;">0.9239</div>
<div class="t" style="right:217.1199999999999px;top:777.57px;font-size:13.5px;color:#252423;font-style:italic;">1.0319</div>
<div class="t" style="right:17.40000000000009px;top:777.57px;font-size:13.5px;color:#252423;font-style:italic;">0.0474</div>
<div class="r" style="left:0px;top:1002px;width:1911px;height:1px;background:#d2d0ce;"></div>
<div class="t" style="left:3.3px;top:1012.22px;font-size:12.73px;color:#323130;">8 COLUMNS, 22 ROWS</div>
<div class="t" style="left:162px;top:1011.32px;font-size:13.8px;color:#323130;">Column profiling based on top 1000 rows</div>
<div class="t" style="left:1685px;top:1012.18px;font-size:12.78px;color:#323130;">PREVIEW DOWNLOADED AT 4:34 PM</div>
<svg class="s" style="left:0;top:0" width="1911" height="1028" viewBox="0 0 1911 1028"><rect x="0" y="4" width="17" height="20" fill="#f2c811"/><rect x="0.5" y="9.6" width="13" height="8" rx="1.6" fill="none" stroke="#1a1a1a" stroke-width="1.3"/><rect x="1.3" y="11" width="11" height="8" fill="#f2c811"/><rect x="3.3" y="16.3" width="1.6" height="3.3000000000000007" rx="0.8" fill="#111"/><rect x="5.3" y="13.3" width="1.6" height="6.300000000000001" rx="0.8" fill="#111"/><rect x="8.3" y="14.8" width="1.6" height="4.800000000000001" rx="0.8" fill="#111"/><rect x="10.2" y="11.3" width="1.6" height="8.3" rx="0.8" fill="#111"/><rect x="23" y="7" width="1" height="16" fill="#999"/><rect x="84" y="7" width="1" height="16" fill="#999"/><rect x="38" y="7" width="16" height="16" rx="1.8" fill="#8553ad"/><rect x="39.8" y="7.8" width="12.2" height="8.2" rx="1.2" fill="#fff"/><rect x="41.8" y="18.2" width="7.3" height="3.8" rx="0.8" fill="#fff"/><rect x="44" y="19" width="1.6" height="3" fill="#8553ad"/><rect x="64" y="13" width="7" height="1.3" fill="#111"/><path d="M64.9 16H70.1L67.5 19Z" fill="#111"/><rect x="1762" y="13" width="12" height="1" fill="#111"/><path d="M1822.5 10V8.5H1831.5V17.5H1830" fill="none" stroke="#111" stroke-width="1"/><rect x="1820.5" y="10.5" width="9" height="9" fill="none" stroke="#111" stroke-width="1.1"/><path d="M1879 8L1891 20M1891 8L1879 20" stroke="#111" stroke-width="0.95"/><path d="M1872.3 45.6L1878 39.9L1883.7 45.6" fill="none" stroke="#9a9a9a" stroke-width="1.2"/><circle cx="1904" cy="42.8" r="8.9" fill="#1a73c8"/><text x="1900.3" y="48.3" font-family="Liberation Sans" font-weight="bold" font-size="13" fill="#fff">?</text><rect x="11.5" y="73.5" width="25" height="8" fill="#fff" stroke="#6d6d6d"/><rect x="21.5" y="88.5" width="25" height="8" fill="#fff" stroke="#6d6d6d"/><path d="M29.5 82L35.5 88" stroke="#6d6d6d"/><rect x="79.5" y="69.5" width="32" height="30" fill="#fff" stroke="#6d6d6d"/><rect x="80" y="70" width="31" height="5.5" fill="#4a7ebb"/><path d="M87.5 70V99" stroke="#9a9a9a"/><path d="M95.5 70V99" stroke="#9a9a9a"/><path d="M103.5 70V99" stroke="#9a9a9a"/><path d="M80 75.5H111" stroke="#9a9a9a"/><path d="M80 81.5H111" stroke="#9a9a9a"/><path d="M80 87.5H111" stroke="#9a9a9a"/><path d="M80 93.5H111" stroke="#9a9a9a"/><rect x="154.5" y="66.5" width="5" height="10" fill="#fff" stroke="#6d6d6d"/><rect x="155" y="67" width="4" height="4.3" fill="#a9c4e4"/><path d="M155 71.5H159" stroke="#6d6d6d"/><rect x="142.5" y="78.5" width="10" height="5" fill="#fff" stroke="#6d6d6d"/><rect x="143" y="79" width="4.5" height="4" fill="#a9c4e4"/><path d="M147.5 79V83" stroke="#6d6d6d"/><path d="M143.8 74.5Q144.5 68.5 151 68.3" fill="none" stroke="#3b78bd" stroke-width="1.2"/><path d="M149.3 66.3L151.8 68.3L149.3 70.3M141.8 72.8L143.8 75.3L145.8 72.8" fill="none" stroke="#3b78bd" stroke-width="1.2"/><rect x="151.5" y="92.5" width="8" height="4" fill="#a9c4e4" stroke="#6d6d6d"/><rect x="151.5" y="98.5" width="8" height="4" fill="#fff" stroke="#6d6d6d"/><path d="M155.5 99V102" stroke="#6d6d6d"/><rect x="151.5" y="104.5" width="8" height="4" fill="#a9c4e4" stroke="#6d6d6d"/><path d="M148.5 94.3H145Q142.6 94.3 142.6 96.7V104.3Q142.6 106.7 145 106.7H148.5" fill="none" stroke="#3b78bd" stroke-width="1.1"/><path d="M146.6 92.3L148.6 94.3L146.6 96.3M146.6 104.7L148.6 106.7L146.6 108.7" fill="none" stroke="#3b78bd" stroke-width="1.1"/><rect x="148.5" y="119.5" width="11" height="14" fill="#fff" stroke="#6d6d6d"/><path d="M149 126.5H159" stroke="#6d6d6d"/><text x="141.6" y="126" font-family="Liberation Sans" font-size="9" fill="#3b78bd">1</text><text x="141.6" y="134" font-family="Liberation Sans" font-size="9" fill="#3b78bd">2</text><rect x="266.5" y="92.5" width="15" height="17" fill="#fff" stroke="#9a9a9a"/><rect x="266" y="92" width="16" height="3" fill="#4a7ebb"/><path d="M271.5 95V109M276.5 95V109M267 99.5H281M267 104.5H281" stroke="#a8a8a8"/><text x="271.3" y="105.5" font-family="Liberation Sans" font-size="10" fill="#3b78bd">?</text><path d="M278 122.5H265.5V129.5H278" fill="none" stroke="#6d6d6d" stroke-width="1.3"/><path d="M281 122.5H282.5V129.5H281" fill="none" stroke="#6d6d6d" stroke-width="1.2"/><rect x="267" y="124" width="10.5" height="4" fill="#3b78bd"/><path d="M279.5 120V133.5M277.3 119.5Q279.5 119.5 279.5 121.5Q279.5 119.5 281.7 119.5M277.3 134Q279.5 134 279.5 132Q279.5 134 281.7 134" fill="none" stroke="#333" stroke-width="1"/><text x="393.6" y="74" font-family="Liberation Sans" font-size="10.5" fill="#444">1</text><text x="405.6" y="84" font-family="Liberation Sans" font-size="10.5" fill="#444">2</text><path d="M396.5 76.8Q397 80 402.5 80" fill="none" stroke="#3b78bd" stroke-width="1.5"/><path d="M400.6 77.6L403 80L400.6 82.4" fill="none" stroke="#3b78bd" stroke-width="1.5"/><rect x="395.5" y="91.5" width="15" height="18" fill="#fff" stroke="#6d6d6d"/><rect x="395" y="91" width="16" height="3.5" fill="#777"/><path d="M403 97V104" stroke="#3b78bd" stroke-width="2.6"/><path d="M398.6 101.8L403 106.8L407.4 101.8L405.6 100.6L403 103.6L400.4 100.6Z" fill="#3b78bd"/><rect x="394.5" y="118.5" width="9" height="6.5" fill="#fff" stroke="#a0a0a0"/><rect x="394" y="118" width="10" height="2" fill="#3b78bd"/><path d="M397.5 121V125M400.5 121V125M395 122.5H403" stroke="#b0b0b0"/><path d="M395.5 124Q395.5 128.3 400 128.3" fill="none" stroke="#3b78bd" stroke-width="1.5"/><path d="M398.5 126.3L400.6 128.3L398.5 130.3" fill="none" stroke="#3b78bd" stroke-width="1.5"/><rect x="402.5" y="131.5" width="9" height="4.5" fill="#fff" stroke="#6d6d6d"/><path d="M405.5 132V136M408.5 132V136" stroke="#999"/><rect x="523.5" y="66.5" width="9" height="4.5" fill="#fff" stroke="#6d6d6d"/><path d="M526.5 67V71M529.5 67V71M524 68.8H532" stroke="#aaa"/><path d="M524 72.5Q524.5 75.5 530 75.5" fill="none" stroke="#3b78bd" stroke-width="1.5"/><path d="M528.3 73.4L530.5 75.5L528.3 77.6" fill="none" stroke="#3b78bd" stroke-width="1.5"/><rect x="531.5" y="76.5" width="9" height="7.5" fill="#fff" stroke="#6d6d6d"/><rect x="531" y="76" width="10" height="2.2" fill="#3b78bd"/><path d="M534.5 78V84M537.5 78V84M532 80.5H540M532 82.3H540" stroke="#aaa"/><path d="M522.5 105V93.5H527.5V105M522.5 99.5H527.5M535.5 105V93.5H540.5V105M535.5 99.5H540.5" fill="#fff" stroke="#6d6d6d"/><rect x="529" y="93" width="5" height="11.5" fill="#3b78bd"/><path d="M525 107H538.5" stroke="#3b78bd" stroke-width="2"/><path d="M527.5 103.8L524.3 107L527.5 110.2M536 103.8L539.2 107L536 110.2" fill="none" stroke="#3b78bd" stroke-width="1.8"/><rect x="527.5" y="118.5" width="8" height="17" fill="#fff" stroke="#6d6d6d"/><path d="M529 120.8H534" stroke="#a8a8a8"/><path d="M529 122.8H534" stroke="#a8a8a8"/><path d="M529 124.8H534" stroke="#a8a8a8"/><path d="M529 126.8H534" stroke="#a8a8a8"/><path d="M529 128.8H534" stroke="#a8a8a8"/><path d="M529 130.8H534" stroke="#a8a8a8"/><path d="M529 132.8H534" stroke="#a8a8a8"/><path d="M683.5 103V85.5H691.5M710.5 85.5H718.5V103" fill="none" stroke="#6d6d6d"/><rect x="683.8" y="86" width="9" height="17" fill="#fff"/><rect x="709" y="86" width="9" height="17" fill="#fff"/><rect x="693" y="71" width="5" height="32" fill="#c1d5ec"/><rect x="704" y="71" width="5" height="32" fill="#c1d5ec"/><path d="M693.5 103V71.5H698M704 71.5H708.5V103" fill="none" stroke="#8f8f8f"/><path d="M697.5 67H704.3L700.9 70.2Z" fill="#3b78bd"/><rect x="739.5" y="79.5" width="33" height="17" fill="#fff" stroke="#9a9a9a"/><rect x="738" y="78" width="3" height="3" fill="#707070"/><rect x="771" y="78" width="3" height="3" fill="#707070"/><rect x="738" y="95" width="3" height="3" fill="#707070"/><rect x="771" y="95" width="3" height="3" fill="#707070"/><text x="741" y="93" font-family="Liberation Sans" font-size="15.2" fill="#7a7a7a" letter-spacing="-0.6">ABC</text><path d="M754.5 84.5L766 73" stroke="#f4f5f7" stroke-width="5.5"/><path d="M754.5 84.5L765.5 73.5" stroke="#3b78bd" stroke-width="3.6"/><path d="M767.3 71.5L769.8 69" stroke="#3b78bd" stroke-width="3.6"/><path d="M749.5 88L751.3 83.5L754 86.2Z" fill="#3b78bd"/><path d="M785.5 84V73.5H789.5M797.5 73.5H802.5V84" fill="none" stroke="#9bafcb"/><rect x="786" y="74" width="4" height="10" fill="#e9eff8"/><rect x="797" y="74" width="5" height="10" fill="#e9eff8"/><rect x="791" y="67" width="6" height="17" fill="#c9d7ea"/><path d="M790 76.5L797.5 82.5M797.5 76.5L790 82.5" stroke="#a8bcd8" stroke-width="1.3"/><text x="785" y="99" font-family="Liberation Sans" font-size="9" fill="#3a3a3a" letter-spacing="0.2">ABC</text><text x="784.6" y="110.3" font-family="Liberation Sans" font-size="11.3" fill="#3a3a3a" letter-spacing="-0.2">123</text><text x="784.8" y="125.9" font-family="Liberation Sans" font-size="10.8" fill="#555" letter-spacing="-0.1">abc</text><path d="M785.5 128Q786 131.3 790.5 131.3" fill="none" stroke="#3b78bd" stroke-width="1.6"/><path d="M788.7 129.2L790.9 131.3L788.7 133.4" fill="none" stroke="#3b78bd" stroke-width="1.6"/><rect x="793.5" y="128.5" width="9" height="7" fill="#fff" stroke="#6d6d6d"/><rect x="793" y="128" width="10" height="2" fill="#3b78bd"/><path d="M796.5 130V136M799.5 130V136M794 132.5H802M794 134.3H802" stroke="#aaa"/><rect x="927" y="66.8" width="15" height="1.2" fill="#707070"/><path d="M928.8 69.6L939.6 83.6M939.6 69.6L928.8 83.6" stroke="#707070" stroke-width="1.6"/><ellipse cx="950.2" cy="77.1" rx="6.2" ry="6.6" fill="none" stroke="#707070" stroke-width="1.6"/><path d="M949 70.3H958.6" stroke="#707070" stroke-width="1.6"/><path d="M950 88.7H936.2L943.6 95.3L936.2 101.9H950M949.6 88V90.5M949.6 100V102.6" fill="none" stroke="#707070" stroke-width="1.5"/><rect x="983" y="68" width="16" height="16" fill="#9bafcb"/><rect x="983" y="86" width="16" height="16" fill="#9bafcb"/><rect x="1001" y="68" width="16" height="16" fill="#9bafcb"/><rect x="1001" y="86" width="16" height="16" fill="#9bafcb"/><path d="M986.5 76H995.5M991 71.5V80.5M1004.5 76H1013.5M986.5 94H995.5M1005.3 89.8L1012.7 97.2M1012.7 89.8L1005.3 97.2" stroke="#fff" stroke-width="1.6"/><circle cx="991" cy="90.6" r="1.1" fill="#fff"/><circle cx="991" cy="97.4" r="1.1" fill="#fff"/><text x="1039.6" y="95.3" font-family="Liberation Sans" font-size="23" fill="#9bafcb" stroke="#9bafcb" stroke-width="0.6" letter-spacing="-1.5">10</text><text x="1063.8" y="82" font-family="Liberation Sans" font-size="14.5" fill="#9bafcb" stroke="#9bafcb" stroke-width="0.3">2</text><path d="M1088.8 83.3L1105.5 66.8V83.3Z" fill="#e9eff8" stroke="#9bafcb" stroke-width="1.3" stroke-linejoin="round"/><path d="M1100.5 83V78.5H1105" fill="none" stroke="#9bafcb"/><path d="M1093 80Q1095 81 1095 83" fill="none" stroke="#9bafcb"/><text x="1091" y="99.8" font-family="Liberation Sans" font-size="9.8" fill="#9bafcb" stroke="#9bafcb" stroke-width="0.55">.00</text><text x="1095" y="109" font-family="Liberation Sans" font-size="9.8" fill="#9bafcb" stroke="#9bafcb" stroke-width="0.55">.0</text><path d="M1089 105.7H1094.5M1092 103L1095 105.7L1092 108.4" fill="none" stroke="#9bafcb" stroke-width="1.6"/><rect x="1088.5" y="118.5" width="16" height="16" fill="#e9eff8" stroke="#9bafcb"/><rect x="1089" y="119" width="6.5" height="15" fill="#cfdbec"/><path d="M1095.5 119V134M1089 126.5H1104M1098 123H1103M1098 130.5H1103M1100.5 128V133" stroke="#9bafcb"/><text x="1089.5" y="125.8" font-family="Liberation Sans" font-size="8" fill="#9bafcb" stroke="#9bafcb" stroke-width="0.3">1</text><text x="1089.5" y="133.6" font-family="Liberation Sans" font-size="8" fill="#9bafcb" stroke="#9bafcb" stroke-width="0.3">3</text><rect x="1224.5" y="70.5" width="30" height="28" fill="#fff" stroke="#777"/><rect x="1224" y="70" width="31" height="4.5" fill="#777"/><path d="M1230.5 74.5V98" stroke="#8f8f8f"/><path d="M1236.5 74.5V98" stroke="#8f8f8f"/><path d="M1242.5 74.5V98" stroke="#8f8f8f"/><path d="M1248.5 74.5V98" stroke="#8f8f8f"/><path d="M1225 80.5H1254" stroke="#8f8f8f"/><path d="M1225 86.5H1254" stroke="#8f8f8f"/><path d="M1225 92.5H1254" stroke="#8f8f8f"/><rect x="1242.5" y="80.5" width="6" height="6" fill="#fff" stroke="#e07a28" stroke-width="1.2"/><circle cx="1290" cy="84.7" r="17.3" fill="#fff" stroke="#3b78bd" stroke-width="1.4"/><path d="M1290.2 72.3V85H1299" fill="none" stroke="#707070" stroke-width="2.2"/><circle cx="1341.6" cy="86.4" r="12" fill="#e9eff8" stroke="#9bafcb" stroke-width="1.3"/><rect x="1338" y="70" width="7.3" height="1.8" fill="#9bafcb"/><rect x="1340.6" y="71.5" width="2" height="3.2" fill="#9bafcb"/><path d="M1341.6 77.2V86.8H1348.3" fill="none" stroke="#9bafcb" stroke-width="1.2"/><circle cx="1346.10" cy="78.61" r="0.55" fill="#9bafcb"/><circle cx="1349.39" cy="81.90" r="0.55" fill="#9bafcb"/><circle cx="1349.39" cy="90.90" r="0.55" fill="#9bafcb"/><circle cx="1346.10" cy="94.19" r="0.55" fill="#9bafcb"/><circle cx="1341.60" cy="95.40" r="0.55" fill="#9bafcb"/><circle cx="1337.10" cy="94.19" r="0.55" fill="#9bafcb"/><circle cx="1333.81" cy="90.90" r="0.55" fill="#9bafcb"/><circle cx="1332.60" cy="86.40" r="0.55" fill="#9bafcb"/><circle cx="1333.81" cy="81.90" r="0.55" fill="#9bafcb"/><circle cx="1337.10" cy="78.61" r="0.55" fill="#9bafcb"/><rect x="1385.5" y="67.5" width="5" height="15" fill="#e9eff8" stroke="#9bafcb"/><path d="M1385 72.63333333333333H1391M1385 77.36666666666667H1391" stroke="#9bafcb"/><rect x="1392" y="67" width="5" height="16" fill="#9bafcb"/><rect x="1398.5" y="67.5" width="5" height="15" fill="#e9eff8" stroke="#9bafcb"/><path d="M1398 72.63333333333333H1404M1398 77.36666666666667H1404" stroke="#9bafcb"/><path d="M1395 75H1401.5M1399.3 72.7L1401.7 75L1399.3 77.3" fill="none" stroke="#fff" stroke-width="2.6"/><path d="M1395 75H1401.5M1399.3 72.7L1401.7 75L1399.3 77.3" fill="none" stroke="#9bafcb" stroke-width="1.2"/><rect x="1385.5" y="93.5" width="5" height="15" fill="#e9eff8" stroke="#9bafcb"/><path d="M1385 98.63333333333333H1391M1385 103.36666666666667H1391" stroke="#9bafcb"/><rect x="1392" y="93" width="5" height="16" fill="#9bafcb"/><rect x="1398.5" y="93.5" width="5" height="8" fill="#e9eff8" stroke="#9bafcb"/><path d="M1398 96.3H1404M1398 98.7H1404" stroke="#9bafcb"/><path d="M1404.7 103.2H1397L1401 106.8L1397 110.4H1404.7" fill="none" stroke="#fff" stroke-width="2.8"/><path d="M1404.7 103.2H1397L1401 106.8L1397 110.4H1404.7" fill="none" stroke="#9bafcb" stroke-width="1.3"/><rect x="1385.5" y="124.5" width="10.5" height="12" fill="#e9eff8" stroke="#9bafcb"/><path d="M1387 127.5H1394.5M1387 130.3H1394.5M1387 133.1H1394.5" stroke="#9bafcb"/><rect x="1399.5" y="118.5" width="5" height="18" fill="#e9eff8" stroke="#9bafcb"/><path d="M1399 124.63333333333333H1405M1399 130.36666666666665H1405" stroke="#9bafcb"/><path d="M1391.8 123Q1392 119.8 1396.5 119.8" fill="none" stroke="#9bafcb" stroke-width="1.5"/><path d="M1395 117.8L1397.2 119.8L1395 121.8" fill="none" stroke="#9bafcb" stroke-width="1.5"/><text transform="translate(1512.4 103) scale(0.8 1)" font-family="Liberation Sans" font-weight="bold" font-size="52" fill="#7a9cce">R</text><text transform="translate(1566 94.2) scale(0.84 1)" font-family="Liberation Sans" font-size="39.7" fill="#1e8ad2" stroke="#1e8ad2" stroke-width="0.9">P</text><text transform="translate(1589 94.2) scale(0.96 1)" font-family="Liberation Sans" font-size="39.7" fill="#1e8ad2" stroke="#1e8ad2" stroke-width="0.9">y</text><path d="M208.3 186.8L202.2 192.6L208.3 198.4" fill="none" stroke="#666" stroke-width="2.6"/><rect x="13.5" y="228.5" width="15" height="14" fill="#fff" stroke="#777"/><rect x="13" y="228" width="16" height="2.5" fill="#4a7ebb"/><path d="M18.5 230.5V242M23.5 230.5V242M14 234.5H28M14 238.5H28" stroke="#9a9a9a"/><rect x="13.5" y="258.5" width="15" height="14" fill="#fff" stroke="#777"/><rect x="13" y="258" width="16" height="2.5" fill="#4a7ebb"/><path d="M18.5 260.5V272M23.5 260.5V272M14 264.5H28M14 268.5H28" stroke="#9a9a9a"/><rect x="234.5" y="194.5" width="15" height="14" fill="#fff" stroke="#777"/><rect x="234" y="194" width="16" height="2.8" fill="#4a7ebb"/><path d="M239.5 197V208M244.5 197V208M235 200.5H249M235 204.5H249" stroke="#9a9a9a"/><path d="M251 205H258L254.5 209Z" fill="#666"/><text x="267" y="206.5" font-family="Liberation Sans" font-size="10.5" fill="#444" stroke="#444" stroke-width="0.3">A</text><text x="273.5" y="201.5" font-family="Liberation Sans" font-size="10.5" fill="#444" stroke="#444" stroke-width="0.3">B</text><text x="279.5" y="210.3" font-family="Liberation Sans" font-size="10.5" fill="#444" stroke="#444" stroke-width="0.3">C</text></svg>
</body></html>
